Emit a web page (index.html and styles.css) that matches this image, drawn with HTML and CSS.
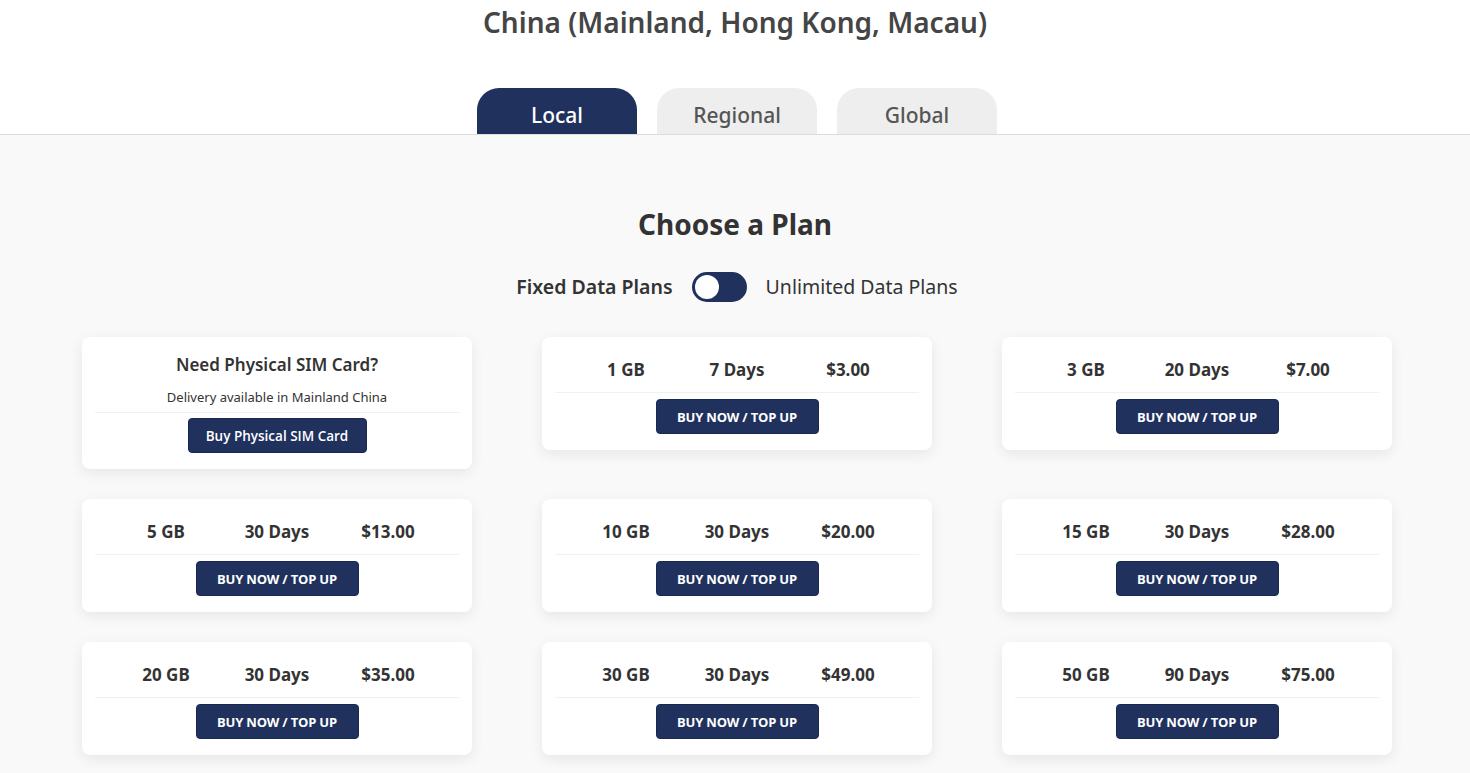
FILE: index.html
```html
<!DOCTYPE html>
<html lang="en">
<head>
<meta charset="utf-8">
<title>China (Mainland, Hong Kong, Macau)</title>
<link rel="stylesheet" href="styles.css">
</head>
<body>
<header class="top">
  <h1 class="title">China (Mainland, Hong Kong, Macau)</h1>
  <nav class="tabs">
    <div class="tab tab-active">Local</div>
    <div class="tab">Regional</div>
    <div class="tab">Global</div>
  </nav>
</header>
<main class="plans">
  <h2 class="plans-title">Choose a Plan</h2>
  <div class="switch-row">
    <span class="switch-label switch-label-on">Fixed Data Plans</span>
    <span class="switch"><span class="knob"></span></span>
    <span class="switch-label">Unlimited Data Plans</span>
  </div>
  <div class="grid">
    <div class="card sim-card">
      <div class="sim-title">Need Physical SIM Card?</div>
      <div class="sim-sub">Delivery available in Mainland China</div>
      <div class="card-foot sim-foot"><button class="btn btn-sim">Buy Physical SIM Card</button></div>
    </div>
    <div class="card">
      <div class="plan-row"><span>1 GB</span><span>7 Days</span><span>$3.00</span></div>
      <div class="card-foot"><button class="btn">BUY NOW / TOP UP</button></div>
    </div>
    <div class="card">
      <div class="plan-row"><span>3 GB</span><span>20 Days</span><span>$7.00</span></div>
      <div class="card-foot"><button class="btn">BUY NOW / TOP UP</button></div>
    </div>
    <div class="card">
      <div class="plan-row"><span>5 GB</span><span>30 Days</span><span>$13.00</span></div>
      <div class="card-foot"><button class="btn">BUY NOW / TOP UP</button></div>
    </div>
    <div class="card">
      <div class="plan-row"><span>10 GB</span><span>30 Days</span><span>$20.00</span></div>
      <div class="card-foot"><button class="btn">BUY NOW / TOP UP</button></div>
    </div>
    <div class="card">
      <div class="plan-row"><span>15 GB</span><span>30 Days</span><span>$28.00</span></div>
      <div class="card-foot"><button class="btn">BUY NOW / TOP UP</button></div>
    </div>
    <div class="card">
      <div class="plan-row"><span>20 GB</span><span>30 Days</span><span>$35.00</span></div>
      <div class="card-foot"><button class="btn">BUY NOW / TOP UP</button></div>
    </div>
    <div class="card">
      <div class="plan-row"><span>30 GB</span><span>30 Days</span><span>$49.00</span></div>
      <div class="card-foot"><button class="btn">BUY NOW / TOP UP</button></div>
    </div>
    <div class="card">
      <div class="plan-row"><span>50 GB</span><span>90 Days</span><span>$75.00</span></div>
      <div class="card-foot"><button class="btn">BUY NOW / TOP UP</button></div>
    </div>
  </div>
</main>
</body>
</html>
```

FILE: styles.css
```css
* { box-sizing: border-box; }
html, body { margin: 0; padding: 0; }
body {
  font-family: "Noto Sans", "Open Sans", sans-serif;
  color: #333;
  background: #f9f9f9;
  overflow: hidden;
}
.top {
  background: #fff;
  border-bottom: 1px solid #dcdcdc;
}
.title {
  margin: 0;
  padding-top: 4px;
  height: 88px;
  text-align: center;
  font-size: 28px;
  line-height: 36px;
  font-weight: 600;
  color: #454545;
}
.tabs {
  display: flex;
  justify-content: center;
  gap: 20px;
  padding-left: 4px;
}
.tab {
  width: 160px;
  height: 46px;
  border-radius: 22px 22px 0 0;
  background: #eeeeee;
  color: #555;
  font-size: 21px;
  font-weight: 500;
  display: flex;
  align-items: center;
  justify-content: center;
  padding-top: 8px;
}
.tab-active {
  background: #20315e;
  color: #fff;
}
.plans {
  padding-top: 72px;
  padding-bottom: 40px;
}
.plans-title {
  margin: 0;
  text-align: center;
  font-size: 28px;
  line-height: 34px;
  font-weight: 700;
  color: #333;
}
.switch-row {
  margin-top: 31px;
  display: flex;
  justify-content: center;
  align-items: center;
  gap: 19px;
  padding-left: 4px;
}
.switch-label {
  font-size: 19.5px;
  line-height: 26px;
  color: #333;
}
.switch-label-on { font-weight: 600; }
.switch {
  width: 55px;
  height: 30px;
  border-radius: 15px;
  background: #20315e;
  display: flex;
  align-items: center;
  padding: 3px;
}
.knob {
  width: 24px;
  height: 24px;
  border-radius: 50%;
  background: #fff;
}
.grid {
  margin-top: 35px;
  display: grid;
  grid-template-columns: repeat(3, 390px);
  column-gap: 70px;
  row-gap: 30px;
  justify-content: center;
  align-items: start;
  padding-left: 4px;
}
.card {
  background: #fff;
  border-radius: 8px;
  box-shadow: 0 4px 14px rgba(0, 0, 0, 0.08);
  padding: 0 13px 16px;
}
.plan-row {
  display: grid;
  grid-template-columns: repeat(3, 111px);
  justify-content: center;
  text-align: center;
  font-size: 17px;
  font-weight: 700;
  color: #333;
  height: 56px;
  padding-top: 22px;
  line-height: 22px;
  border-bottom: 1px solid #f1f1f1;
}
.card-foot {
  display: flex;
  justify-content: center;
  padding-top: 6px;
}
.btn {
  font-family: "Open Sans", "Noto Sans", sans-serif;
  background: #20315e;
  color: #fff;
  border: 1px solid #1a2850;
  border-radius: 4px;
  height: 35px;
  width: 163px;
  font-size: 13px;
  font-weight: 700;
  letter-spacing: -0.2px;
  padding: 0;
}
.btn-sim {
  width: 179px;
  font-weight: 600;
  font-size: 13.5px;
  letter-spacing: 0;
}
.sim-card { padding-top: 17px; padding-bottom: 16px; }
.sim-title {
  text-align: center;
  font-size: 17px;
  font-weight: 600;
  line-height: 22px;
  color: #333;
}
.sim-sub {
  text-align: center;
  font-size: 13px;
  line-height: 18px;
  color: #333;
  margin-top: 12px;
  padding-bottom: 6px;
  border-bottom: 1px solid #f1f1f1;
}
.sim-foot { padding-top: 5px; }
```
